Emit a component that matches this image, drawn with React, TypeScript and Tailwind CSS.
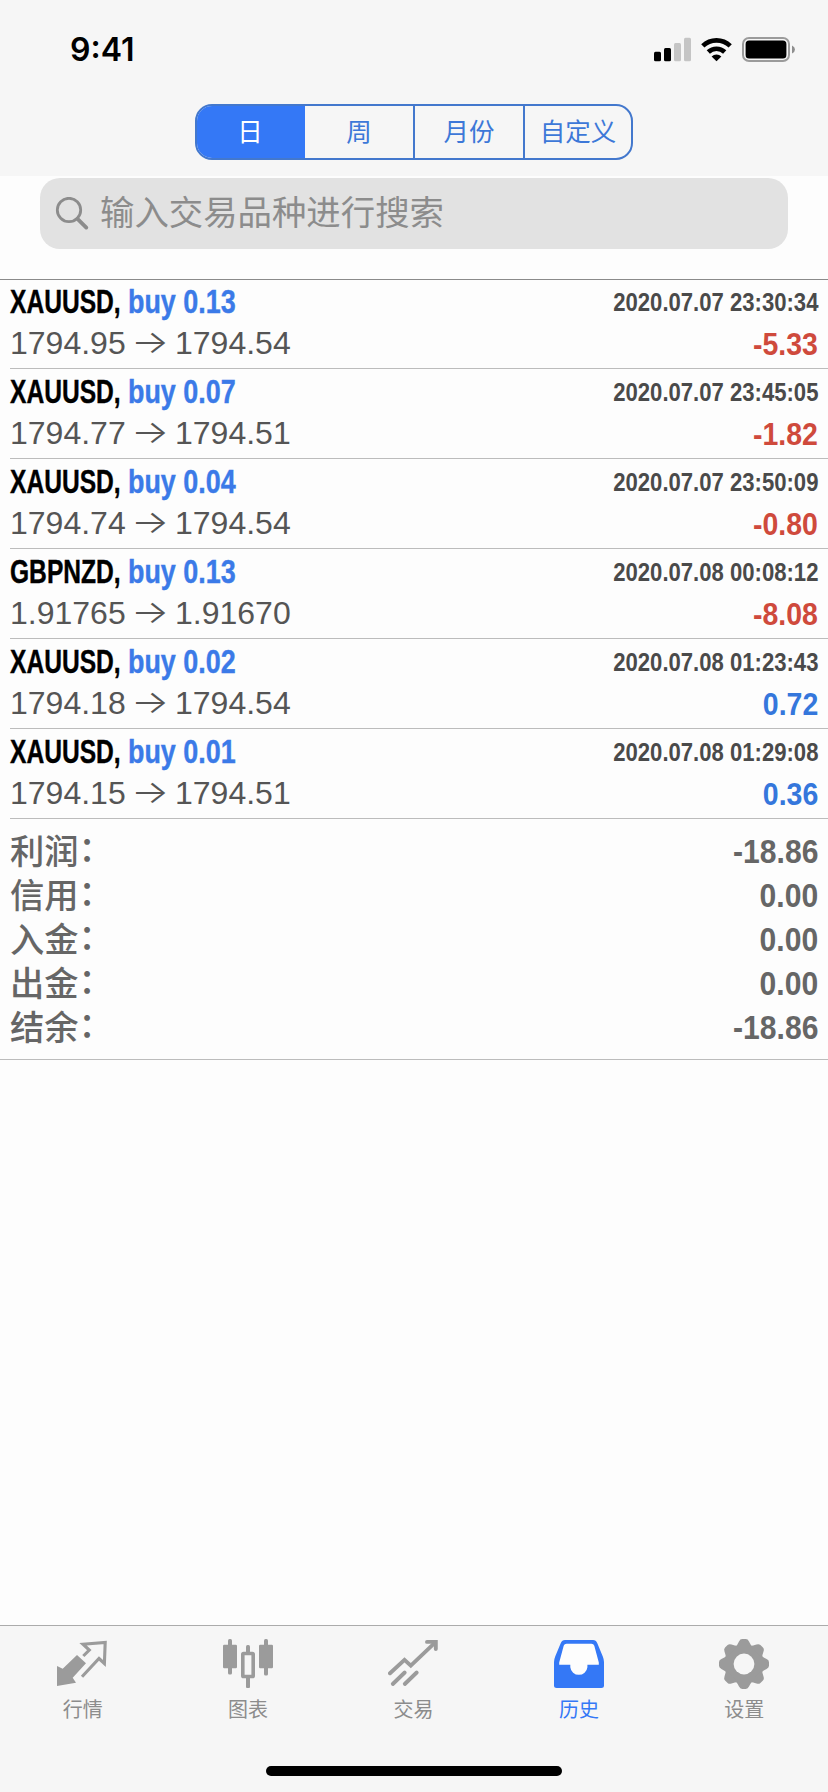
import type { ReactNode } from "react"

interface Deal {
  symbol: string
  volume: string
  open: string
  close: string
  time: string
  profit: string
}

interface Tab {
  label: string
  icon: ReactNode
  active?: boolean
}

const periods = [
  { label: "日", cell: "w-[108px] pr-[2px] bg-[#3478f6] text-white" },
  { label: "周", cell: "w-[108px] text-[#3d78d8]" },
  { label: "月份", cell: "w-[110px] border-l-2 border-[#4378cd] text-[#3d78d8]" },
  { label: "自定义", cell: "w-[108px] border-l-2 border-[#4378cd] text-[#3d78d8]" },
]

const deals: Deal[] = [
  { symbol: "XAUUSD", volume: "0.13", open: "1794.95", close: "1794.54", time: "2020.07.07 23:30:34", profit: "-5.33" },
  { symbol: "XAUUSD", volume: "0.07", open: "1794.77", close: "1794.51", time: "2020.07.07 23:45:05", profit: "-1.82" },
  { symbol: "XAUUSD", volume: "0.04", open: "1794.74", close: "1794.54", time: "2020.07.07 23:50:09", profit: "-0.80" },
  { symbol: "GBPNZD", volume: "0.13", open: "1.91765", close: "1.91670", time: "2020.07.08 00:08:12", profit: "-8.08" },
  { symbol: "XAUUSD", volume: "0.02", open: "1794.18", close: "1794.54", time: "2020.07.08 01:23:43", profit: "0.72" },
  { symbol: "XAUUSD", volume: "0.01", open: "1794.15", close: "1794.51", time: "2020.07.08 01:29:08", profit: "0.36" },
]

const summary = [
  { label: "利润", value: "-18.86" },
  { label: "信用", value: "0.00" },
  { label: "入金", value: "0.00" },
  { label: "出金", value: "0.00" },
  { label: "结余", value: "-18.86" },
]

function QuotesIcon() {
  return (
    <svg viewBox="0 0 50 50" className="w-[50px] h-[50px] -ml-[2px]">
      <path d="M20 17L29 25.3L15.7 39.7L19 44.8L0 48V28L5.7 30.7Z" fill="currentColor" />
      <path d="M26.3 18L32.3 12L26 6.2L48.2 4.4L47.4 25.5L42 20.5L25 38.8" fill="none" stroke="currentColor" strokeWidth="3.1" />
    </svg>
  )
}

function ChartIcon() {
  return (
    <svg viewBox="0 0 50 50" className="w-[50px] h-[50px]" fill="currentColor">
      <rect x="0" y="6.7" width="14" height="23.6" rx="1.2" />
      <rect x="5" y="1" width="4" height="35.5" rx="1.5" />
      <rect x="36" y="6.7" width="14" height="23.6" rx="1.2" />
      <rect x="41" y="1" width="4" height="36.5" rx="1.5" />
      <rect x="19.8" y="15.5" width="10.4" height="23" rx="0.8" fill="none" stroke="currentColor" strokeWidth="3.6" />
      <rect x="23" y="7" width="4" height="8" rx="1.5" />
      <rect x="23" y="39" width="4" height="11" rx="1" />
    </svg>
  )
}

function TradeIcon() {
  return (
    <svg viewBox="0 0 50 50" className="w-[50px] h-[50px] -ml-px" fill="none" stroke="currentColor" strokeWidth="3.9" strokeLinecap="round" strokeLinejoin="round">
      <path d="M2 35.3L16.5 21.8L22.8 27.6L47 4.6" strokeLinejoin="miter" />
      <path d="M39 3.9H47.8V11" strokeLinejoin="miter" />
      <path d="M4.8 46L16.7 34.5M16.8 46L28.7 34.5" />
    </svg>
  )
}

function HistoryIcon() {
  return (
    <svg viewBox="0 0 50 50" className="w-[50px] h-[50px]">
      <path d="M11 2H39Q42 2 43.2 5L48.8 18.5Q50 21.5 50 24V47.5Q50 50 47.3 50H2.7Q0 50 0 47.5V24Q0 21.5 1.2 18.5L6.8 5Q8 2 11 2Z" fill="currentColor" />
      <path d="M12.5 5.8H37.5Q39.6 5.8 40.3 7.8L44.8 24.5V26.8H33.4V29.2A8.6 8.6 0 0 1 16.3 29.2V26.8H5.2V24.5L9.7 7.8Q10.4 5.8 12.5 5.8Z" fill="#fdfdfd" />
    </svg>
  )
}

function SettingsIcon() {
  const teeth = [0, 45, 90, 135, 180, 225, 270, 315]
  return (
    <svg viewBox="-25 -26 50 50" className="w-[50px] h-[50px] overflow-visible" fill="currentColor">
      <circle r="19.6" />
      {teeth.map((angle) => (
        <path key={angle} transform={`rotate(${angle})`} d="M-8.5 -17Q-6.5 -19.4 -5 -22.6Q-3.9 -25 -1.8 -25H1.8Q3.9 -25 5 -22.6Q6.5 -19.4 8.5 -17Z" />
      ))}
      <circle r="10.4" fill="#f6f6f6" />
    </svg>
  )
}

const tabs: Tab[] = [
  { label: "行情", icon: <QuotesIcon /> },
  { label: "图表", icon: <ChartIcon /> },
  { label: "交易", icon: <TradeIcon /> },
  { label: "历史", icon: <HistoryIcon />, active: true },
  { label: "设置", icon: <SettingsIcon /> },
]

function StatusBar() {
  return (
    <div className="h-[104px] pl-[70px] pr-[33px] pt-[37px] flex items-start justify-between">
      <span className="font-['Inter'] font-semibold text-[32px] leading-[26px] text-black">9:41</span>
      <div className="flex items-start">
        <svg viewBox="0 0 37 25" className="w-[37px] h-[25px] mr-[10px]">
          <rect x="0" y="14.7" width="7" height="9.5" rx="1.5" />
          <rect x="10" y="11" width="7" height="13.2" rx="1.5" />
          <rect x="20" y="6" width="7" height="18.2" rx="1.5" fill="#c5c5c5" />
          <rect x="30" y="0.8" width="7" height="23.4" rx="1.5" fill="#c5c5c5" />
        </svg>
        <svg viewBox="0 0 31 25" className="w-[31px] h-[25px] mr-[10px]">
          <path d="M1.8 8.9A20 20 0 0 1 29.2 8.9M7.3 15A12 12 0 0 1 23.7 15" fill="none" stroke="#000" strokeWidth="4.7" />
          <path d="M15.5 24.3L10.6 19.4A7.4 7.4 0 0 1 20.4 19.4Z" />
        </svg>
        <svg viewBox="0 0 53 25" className="w-[53px] h-[25px]">
          <rect x="1" y="1" width="46" height="23" rx="6" fill="none" stroke="#9b9b9b" strokeWidth="2" />
          <rect x="3.6" y="3.6" width="40.8" height="17.8" rx="3.5" />
          <path d="M50 8.5Q53 10 53 12.5T50 16.5Z" fill="#8e8e8e" />
        </svg>
      </div>
    </div>
  )
}

function DealRow({ deal }: { deal: Deal }) {
  const loss = deal.profit.startsWith("-")
  return (
    <div className="ml-[10px] pr-[10px] h-[90px] border-b border-[#bcbcbc] flex justify-between whitespace-nowrap">
      <div>
        <div className="flex pt-[3px] h-[44px] leading-[40px] font-bold text-[33px] [-webkit-text-stroke:0.4px]">
          <div className="w-[118px]">
            <span className="inline-block origin-left scale-x-[0.745] text-black">{deal.symbol},</span>
          </div>
          <span className="inline-block origin-left scale-x-[0.815] text-[#3b7ae8]">buy {deal.volume}</span>
        </div>
        <div className="flex items-center leading-[40px] text-[32px] text-[#555]">
          <span className="w-[122px]">{deal.open}</span>
          <span className="w-[44px] leading-[36px] pb-[2px] font-['Inter'] font-light origin-left scale-x-[1.25] -ml-px">→</span>
          <span>{deal.close}</span>
        </div>
      </div>
      <div className="flex flex-col items-end font-bold">
        <span className="block pt-[3px] h-[45px] leading-[40px] text-[26px] origin-right scale-x-[0.85] text-[#4a4a4a]">{deal.time}</span>
        <span className={`block leading-[40px] text-[32px] origin-right scale-x-[0.89] ${loss ? "text-[#cf4a3c]" : "text-[#3577dc]"}`}>
          {deal.profit}
        </span>
      </div>
    </div>
  )
}

export default function App() {
  return (
    <div className="w-[828px] h-[1792px] flex flex-col bg-[#fdfdfd] font-['Liberation_Sans','Noto_Sans_CJK_SC',sans-serif]">
      <header className="h-[176px] bg-[#f6f6f6]">
        <StatusBar />
        <div className="w-[438px] h-[56px] ml-[195px] flex rounded-[17px] border-2 border-[#4378cd] overflow-hidden text-[25.5px]">
          {periods.map((period) => (
            <div key={period.label} className={`flex items-center justify-center pt-px ${period.cell}`}>
              {period.label}
            </div>
          ))}
        </div>
      </header>

      <div className="h-[103px] pt-[2px] px-[40px]">
        <div className="h-[71px] rounded-[20px] bg-[#e2e2e2] pl-[15px] flex items-center text-[#8c8c8c]">
          <svg viewBox="0 0 34 34" className="w-[34px] h-[34px] mr-[11px]" fill="none" stroke="currentColor">
            <circle cx="14" cy="13" r="11.7" strokeWidth="2.8" />
            <path d="M22.5 21.8L31.3 30.6" strokeWidth="3.8" strokeLinecap="round" />
          </svg>
          <span className="pt-px text-[34.4px]">输入交易品种进行搜索</span>
        </div>
      </div>

      <main className="flex-1 border-t border-[#8a8a8a]">
        <div className="-mt-px">
          {deals.map((deal) => (
            <DealRow key={deal.time} deal={deal} />
          ))}
        </div>
        <div className="h-[241px] pt-[10px] px-[10px] border-b border-[#bcbcbc] text-[#666]">
          {summary.map((row) => (
            <div key={row.label} className="h-[44px] flex items-center justify-between">
              <span className="pt-px text-[34.3px] leading-[44px] font-medium">
                {row.label}
                <span className="relative -top-[3px]">：</span>
              </span>
              <span className="text-[34px] leading-[44px] font-bold origin-right scale-x-[0.885]">{row.value}</span>
            </div>
          ))}
        </div>
      </main>

      <footer className="h-[167px] border-t border-[#ababab] bg-[#f6f6f6] flex flex-col">
        <nav className="flex pt-[12px] pr-px h-[140px]">
          {tabs.map((tab) => (
            <div key={tab.label} className={`flex-1 flex flex-col items-center ${tab.active ? "text-[#3478f6]" : "text-[#9b9b9b]"}`}>
              {tab.icon}
              <span className={`mt-[7px] text-[20px] leading-[30px] ${tab.active ? "" : "text-[#8c8c8c]"}`}>{tab.label}</span>
            </div>
          ))}
        </nav>
        <div className="w-[296px] h-[10px] mx-auto rounded-full bg-black"></div>
      </footer>
    </div>
  )
}
